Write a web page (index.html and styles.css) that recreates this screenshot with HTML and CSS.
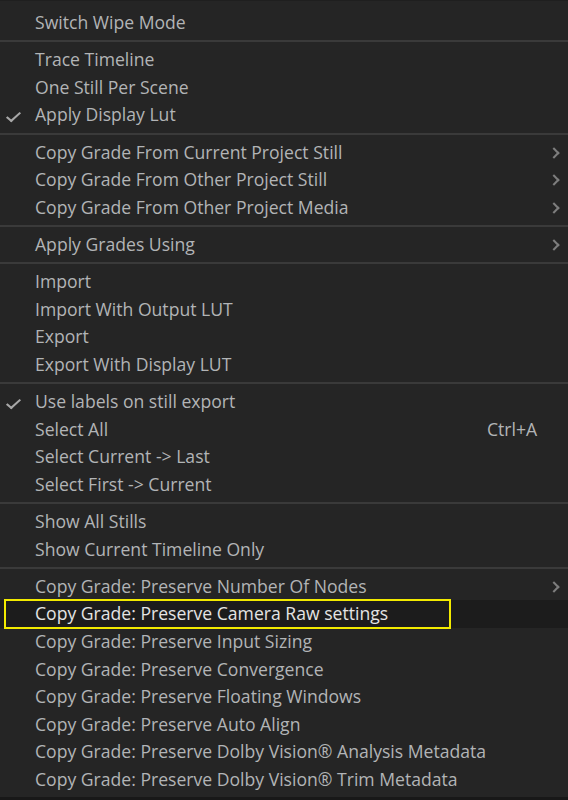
FILE: index.html
```html
<!DOCTYPE html>
<html lang="en">
<head>
    <meta charset="UTF-8">
    <meta name="viewport" content="width=device-width, initial-scale=1.0">
    <title>Stills Context Menu</title>
    <link rel="stylesheet" href="styles.css">
</head>
<body>
    <div class="menu">
        <div class="item">Switch Wipe Mode</div>
        <div class="sep"></div>
        <div class="item">Trace Timeline</div>
        <div class="item">One Still Per Scene</div>
        <div class="item checked">Apply Display Lut</div>
        <div class="sep"></div>
        <div class="item sub">Copy Grade From Current Project Still</div>
        <div class="item sub">Copy Grade From Other Project Still</div>
        <div class="item sub">Copy Grade From Other Project Media</div>
        <div class="sep"></div>
        <div class="item sub">Apply Grades Using</div>
        <div class="sep"></div>
        <div class="item">Import</div>
        <div class="item">Import With Output LUT</div>
        <div class="item">Export</div>
        <div class="item">Export With Display LUT</div>
        <div class="sep"></div>
        <div class="item checked">Use labels on still export</div>
        <div class="item">Select All<span class="shortcut">Ctrl+A</span></div>
        <div class="item">Select Current -&gt; Last</div>
        <div class="item">Select First -&gt; Current</div>
        <div class="sep"></div>
        <div class="item">Show All Stills</div>
        <div class="item">Show Current Timeline Only</div>
        <div class="sep"></div>
        <div class="item sub">Copy Grade: Preserve Number Of Nodes</div>
        <div class="item hover marked">Copy Grade: Preserve Camera Raw settings</div>
        <div class="item">Copy Grade: Preserve Input Sizing</div>
        <div class="item">Copy Grade: Preserve Convergence</div>
        <div class="item">Copy Grade: Preserve Floating Windows</div>
        <div class="item">Copy Grade: Preserve Auto Align</div>
        <div class="item">Copy Grade: Preserve Dolby Vision® Analysis Metadata</div>
        <div class="item">Copy Grade: Preserve Dolby Vision® Trim Metadata</div>
    </div>
</body>
</html>
```

FILE: styles.css
```css
body {
    margin: 0;
    background: #252525;
    font-family: "Open Sans", "Noto Sans", sans-serif;
}

.menu {
    width: 568px;
    height: 800px;
    box-sizing: border-box;
    padding-top: 8px;
    background: #252525;
    border-top: 1px solid #1f1f1f;
    border-bottom: 3px solid #181818;
    overflow: hidden;
}

.item {
    position: relative;
    height: 27.6px;
    line-height: 27.6px;
    padding-left: 35px;
    padding-right: 32px;
    font-size: 17.6px;
    color: #b2b4b6;
    white-space: nowrap;
}

.item.checked::before {
    content: "";
    position: absolute;
    left: 10px;
    top: 8px;
    width: 5px;
    height: 11px;
    border-right: 2px solid #a8a8a8;
    border-bottom: 2px solid #a8a8a8;
    transform: rotate(40deg) skewX(-8deg);
}

.item.sub::after {
    content: "";
    position: absolute;
    right: 10px;
    top: 10px;
    width: 6px;
    height: 6px;
    border-right: 2px solid #7e7e7e;
    border-top: 2px solid #7e7e7e;
    transform: rotate(45deg);
}

.shortcut {
    position: absolute;
    left: 487px;
}

.item.hover {
    background: #1c1c1c;
    color: #e4e4e4;
}

/* yellow call-out frame around the hovered entry */
.item.marked::after {
    content: "";
    position: absolute;
    left: 4px;
    top: -1px;
    width: 443px;
    height: 26px;
    border: 2px solid #f2ea00;
}

.sep {
    height: 9.6px;
    display: flex;
    align-items: center;
}

.sep::before {
    content: "";
    flex: 1;
    height: 2px;
    background: #3a3a3a;
}
```
